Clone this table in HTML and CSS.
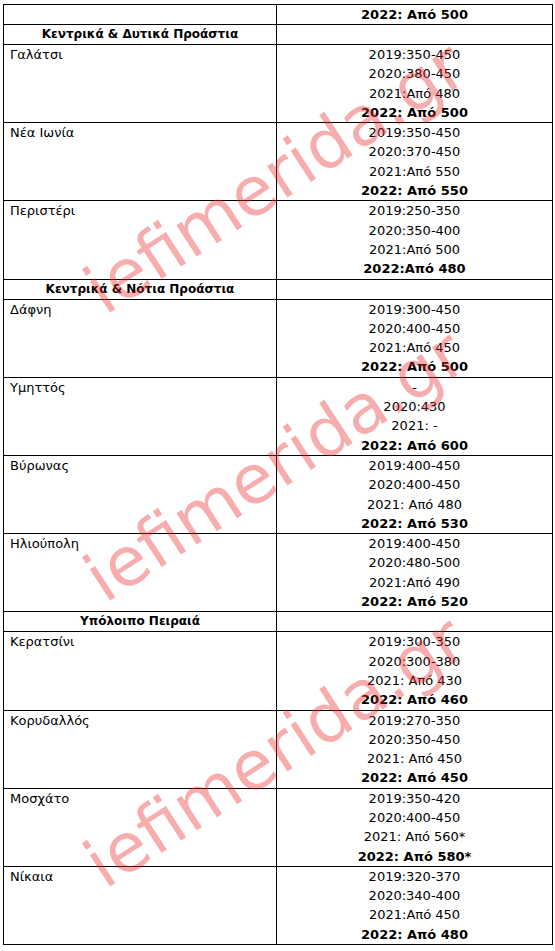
FILE: index.html
```html
<!DOCTYPE html>
<html lang="el">
<head>
<meta charset="utf-8">
<title>Ενοίκια</title>
<link rel="stylesheet" href="styles.css">
</head>
<body>
<div class="page">
  <div class="grid">
    <div class="cell name"></div>
    <div class="cell vals short"><b>2022: Από 500</b></div>

    <div class="cell head">Κεντρικά &amp; Δυτικά Προάστια</div>
    <div class="cell vals short"></div>

    <div class="cell name">Γαλάτσι</div>
    <div class="cell vals">2019:350-450<br>2020:380-450<br>2021:Από 480<br><b>2022: Από 500</b></div>

    <div class="cell name">Νέα Ιωνία</div>
    <div class="cell vals">2019:350-450<br>2020:370-450<br>2021:Από 550<br><b>2022: Από 550</b></div>

    <div class="cell name">Περιστέρι</div>
    <div class="cell vals">2019:250-350<br>2020:350-400<br>2021:Από 500<br><b>2022:Από 480</b></div>

    <div class="cell head">Κεντρικά &amp; Νότια Προάστια</div>
    <div class="cell vals short"></div>

    <div class="cell name">Δάφνη</div>
    <div class="cell vals">2019:300-450<br>2020:400-450<br>2021:Από 450<br><b>2022: Από 500</b></div>

    <div class="cell name">Υμηττός</div>
    <div class="cell vals">-<br>2020:430<br>2021: -<br><b>2022: Από 600</b></div>

    <div class="cell name">Βύρωνας</div>
    <div class="cell vals">2019:400-450<br>2020:400-450<br>2021: Από 480<br><b>2022: Από 530</b></div>

    <div class="cell name">Ηλιούπολη</div>
    <div class="cell vals">2019:400-450<br>2020:480-500<br>2021:Από 490<br><b>2022: Από 520</b></div>

    <div class="cell head">Υπόλοιπο Πειραιά</div>
    <div class="cell vals short"></div>

    <div class="cell name">Κερατσίνι</div>
    <div class="cell vals">2019:300-350<br>2020:300-380<br>2021: Από 430<br><b>2022: Από 460</b></div>

    <div class="cell name">Κορυδαλλός</div>
    <div class="cell vals">2019:270-350<br>2020:350-450<br>2021: Από 450<br><b>2022: Από 450</b></div>

    <div class="cell name">Μοσχάτο</div>
    <div class="cell vals">2019:350-420<br>2020:400-450<br>2021: Από 560*<br><b>2022: Από 580*</b></div>

    <div class="cell name">Νίκαια</div>
    <div class="cell vals">2019:320-370<br>2020:340-400<br>2021:Από 450<br><b>2022: Από 480</b></div>
  </div>

  <div class="wm wm1">iefimerida.gr</div>
  <div class="wm wm2">iefimerida.gr</div>
  <div class="wm wm3">iefimerida.gr</div>
</div>
</body>
</html>
```

FILE: styles.css
```css
html, body {
  margin: 0;
  padding: 0;
  background: #fff;
}

.page {
  position: relative;
  width: 555px;
  height: 951px;
  overflow: hidden;
  padding: 4px 0 0 3px;
  box-sizing: border-box;
  font-family: "DejaVu Sans", "Liberation Sans", sans-serif;
  font-size: 13px;
  color: #000;
}

.grid {
  display: grid;
  grid-template-columns: 273px 276px;
  border-top: 1px solid #000;
  border-left: 1px solid #000;
  width: 549px;
}

.cell {
  border-right: 1px solid #000;
  border-bottom: 1px solid #000;
  line-height: 19.3px;
  min-height: 19px;
}

.name {
  padding-left: 6px;
}

.head {
  text-align: center;
  font-weight: bold;
  font-size: 12px;
  line-height: 19px;
}

.vals {
  text-align: center;
}

.vals b {
  font-weight: bold;
}

.short {
  line-height: 19px;
}

.wm {
  position: absolute;
  font-family: "DejaVu Sans", sans-serif;
  font-size: 68px;
  line-height: 1;
  color: rgba(235, 40, 40, 0.38);
  white-space: nowrap;
  transform: translate(-50%, -50%) rotate(-33deg);
  pointer-events: none;
}

.wm1 { left: 275px; top: 178px; }
.wm2 { left: 275px; top: 466px; }
.wm3 { left: 275px; top: 752px; }
```
